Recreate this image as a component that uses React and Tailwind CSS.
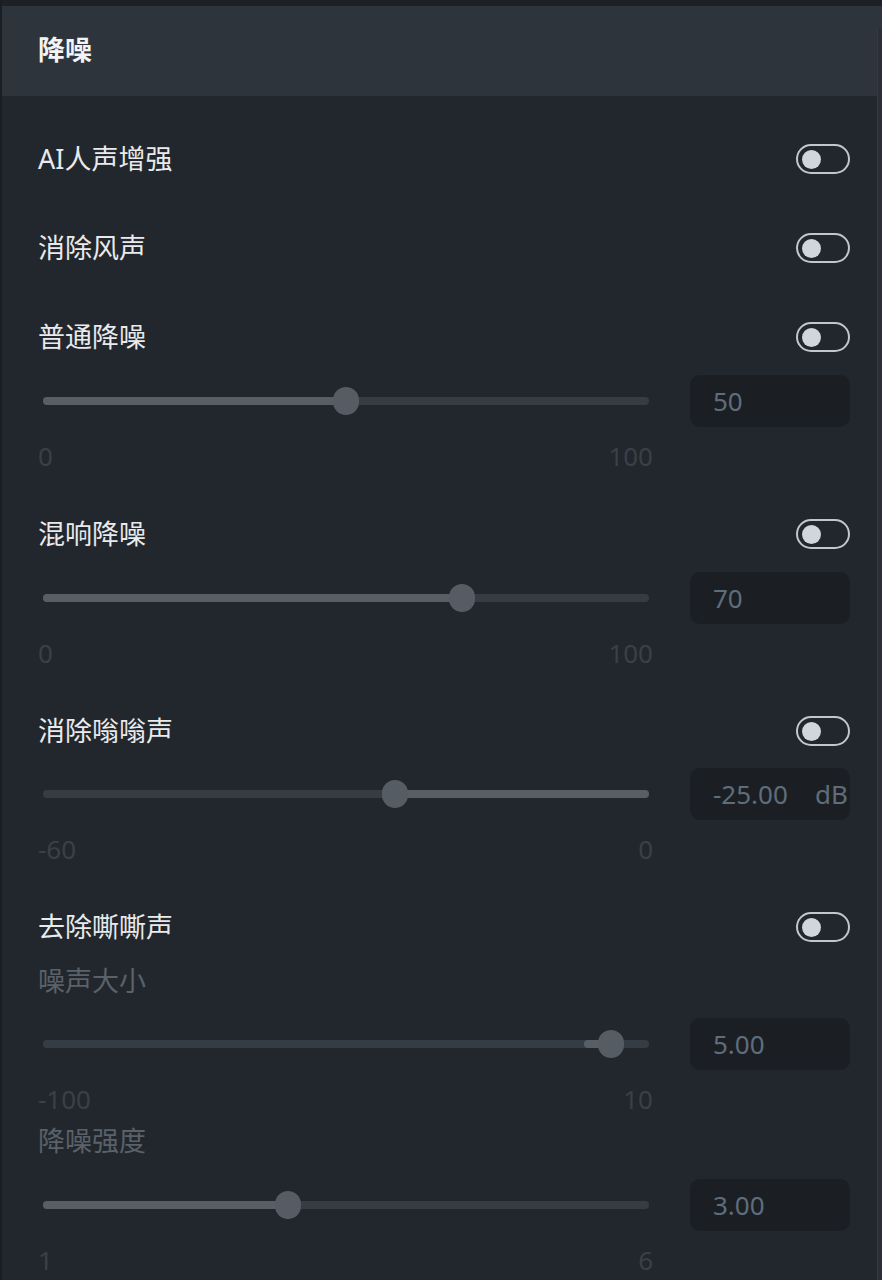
import { useState } from "react";

const FONT = { fontFamily: '"Noto Sans", "Noto Sans CJK SC", sans-serif' };

function Toggle({ on, onChange }) {
  return (
    <button
      onClick={() => onChange(!on)}
      className="w-[54px] h-[30px] rounded-full border-2 border-[#c3c7cc] flex items-center px-[4px] shrink-0"
    >
      <span
        className={
          "w-[19px] h-[19px] rounded-full bg-[#d2d6da] " + (on ? "ml-auto" : "")
        }
      />
    </button>
  );
}

function ToggleRow({ label, mt = "mt-[48px]" }) {
  const [on, setOn] = useState(false);
  return (
    <div className={"flex items-center justify-between h-[30px] " + mt}>
      <span className="text-[27px] leading-[30px] text-[#e8eaec]">{label}</span>
      <Toggle on={on} onChange={setOn} />
    </div>
  );
}

function Slider({ min, max, value }) {
  const pct = (v) => (v - min) / (max - min);
  const origin = Math.min(Math.max(0, min), max);
  const a = pct(Math.min(origin, value));
  const b = pct(Math.max(origin, value));
  // thumb travels 12px inside each end of the 606px track
  const pos = (p) => `calc(12px + ${p} * (100% - 24px))`;
  return (
    <div className="relative h-[28px] w-[606px] ml-[5px] flex items-center">
      <div className="w-full h-[8px] rounded-full bg-[#363c44]" />
      <div
        className="absolute top-[10px] h-[8px] bg-[#575e66] rounded-full"
        style={{
          left: a === 0 ? 0 : pos(a),
          width: `calc(${b === 1 ? "100%" : pos(b)} - ${a === 0 ? "0px" : pos(a)})`,
        }}
      />
      <div
        className="absolute top-[0px] w-[26px] h-[28px] -ml-[13px] rounded-full bg-[#555c64]"
        style={{ left: pos(pct(value)) }}
      />
    </div>
  );
}

function SliderBlock({ min, max, value, text, unit, mt = "mt-[23px]" }) {
  return (
    <>
      <div className={"flex items-center h-[52px] " + mt}>
        <Slider min={min} max={max} value={value} />
        <div className="ml-auto w-[160px] h-[52px] rounded-[10px] bg-[#1b1f24] flex items-center pl-[23px] pr-[2px] text-[26px] text-[#5f6d7b]">
          <span>{text}</span>
          {unit && <span className="ml-auto">{unit}</span>}
        </div>
      </div>
      <div className="flex justify-between w-[615px] h-[30px] mt-[14px] text-[26px] leading-[30px] text-[#3a4047]">
        <span>{min}</span>
        <span>{max}</span>
      </div>
    </>
  );
}

function SubLabel({ label, mt }) {
  return (
    <div className={"h-[30px] text-[27px] leading-[30px] text-[#5a6169] " + mt}>
      {label}
    </div>
  );
}

export default function App() {
  return (
    <div
      className="relative w-[882px] h-[1280px] overflow-hidden bg-[#22272d] border-l-2 border-[#1a1e22]"
      style={FONT}
    >
      <div className="h-[6px] bg-[#1d2126]" />
      <div className="h-[90px] bg-[#2e343b] flex items-center pl-[36px] pb-[2px]">
        <span className="text-[27px] font-semibold text-[#f2f3f4]">降噪</span>
      </div>

      <div className="pl-[36px] pr-[32px]">
        <ToggleRow label="AI人声增强" mt="mt-[48px]" />
        <ToggleRow label="消除风声" mt="mt-[59px]" />
        <ToggleRow label="普通降噪" mt="mt-[59px]" />
        <SliderBlock min={0} max={100} value={50} text="50" />

        <ToggleRow label="混响降噪" />
        <SliderBlock min={0} max={100} value={70} text="70" />

        <ToggleRow label="消除嗡嗡声" />
        <SliderBlock min={-60} max={0} value={-25} text="-25.00" unit="dB" mt="mt-[22px]" />

        <ToggleRow label="去除嘶嘶声" />
        <SubLabel label="噪声大小" mt="mt-[24px]" />
        <SliderBlock min={-100} max={10} value={5} text="5.00" mt="mt-[22px]" />
        <SubLabel label="降噪强度" mt="mt-[12px]" />
        <SliderBlock min={1} max={6} value={3} text="3.00" />
      </div>

      <div className="absolute right-0 top-[28px] bottom-0 w-[5px] bg-[#2a2f35] border-l border-[#353b42]" />
    </div>
  );
}
